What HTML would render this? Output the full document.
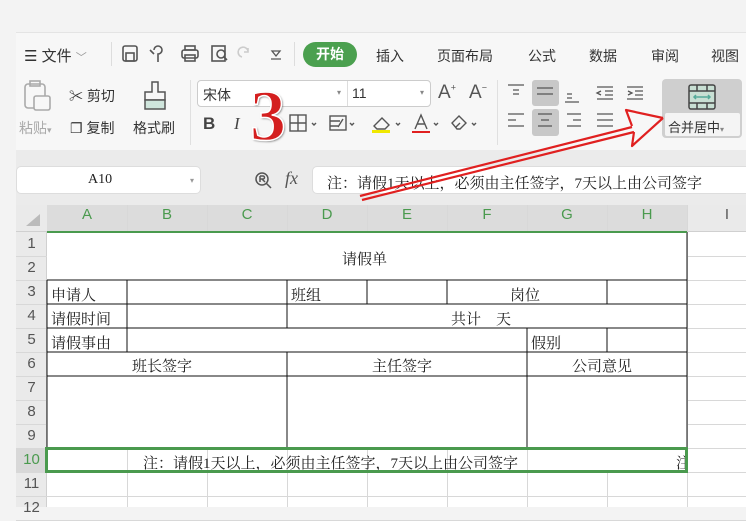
<!DOCTYPE html>
<html><head><meta charset="utf-8"><style>
*{margin:0;padding:0;box-sizing:border-box}
body{width:746px;height:507px;overflow:hidden;background:#f3f3f3;position:relative;font-family:"Liberation Sans","Noto Sans CJK SC",sans-serif;color:#333}
.a{position:absolute}
.t{font-size:14px;color:#333;white-space:nowrap}
.s{font-family:"Liberation Serif","Noto Serif CJK SC",serif;font-size:15px;color:#222;white-space:nowrap}
.hl{position:absolute;background:#d8d8d8}
</style></head><body>
<div class="a" style="left:16px;top:32px;width:730px;height:120px;background:#f7f7f7;border-top:1px solid #e4e4e4"></div>
<div class="a" style="left:16px;top:150px;width:730px;height:55px;background:#ebebeb"></div>
<div class="a t" style="left:24px;top:45px;font-size:15px">☰ 文件 <span style="color:#999;font-size:11px">﹀</span></div>
<div class="a" style="left:111px;top:42px;width:1px;height:24px;background:#ddd"></div>
<svg class="a" style="left:120px;top:44px" width="170" height="20" fill="none" stroke="#555" stroke-width="1.6">
<rect x="3" y="2" width="14" height="15" rx="2"/><rect x="6" y="9" width="8" height="8"/>
<path d="M34 6a4 4 0 1 1 4 4v8M30 6l4 4"/>
<rect x="62" y="6" width="16" height="8" rx="2"/><rect x="65" y="2" width="10" height="4"/><rect x="65" y="11" width="10" height="6"/>
<rect x="92" y="2" width="13" height="15"/><circle cx="101" cy="10" r="4"/><path d="M104 13l3 3"/>
<path d="M122 13a5 5 0 1 1 6-6M128 4v4h-4" stroke="#ccc"/>
<path d="M152 7h8l-4 5zM151 15h10" stroke-width="1.3"/>
</svg>
<div class="a" style="left:294px;top:42px;width:1px;height:24px;background:#ddd"></div>
<div class="a" style="left:303px;top:42px;width:54px;height:25px;border-radius:13px;background:#4ba04f;color:#fff;font-size:14px;font-weight:bold;text-align:center;line-height:25px">开始</div>
<div class="a t" style="left:376px;top:46px">插入</div>
<div class="a t" style="left:437px;top:46px">页面布局</div>
<div class="a t" style="left:528px;top:46px">公式</div>
<div class="a t" style="left:589px;top:46px">数据</div>
<div class="a t" style="left:651px;top:46px">审阅</div>
<div class="a t" style="left:711px;top:46px">视图</div>
<svg class="a" style="left:22px;top:80px" width="32" height="34" fill="none" stroke="#aaa" stroke-width="1.6"><rect x="3" y="4" width="20" height="24" rx="3"/><rect x="8" y="1" width="10" height="5"/><rect x="12" y="16" width="16" height="14" rx="2" fill="#f7f7f7"/></svg>
<div class="a t" style="left:19px;top:118px;color:#aaa">粘贴<span style="font-size:9px">▾</span></div>
<div class="a t" style="left:69px;top:86px">✂ 剪切</div>
<div class="a t" style="left:70px;top:118px">❐ 复制</div>
<svg class="a" style="left:141px;top:80px" width="28" height="32" fill="none" stroke="#555" stroke-width="1.5"><path d="M11 2h6v10h7v8H4v-8h7z"/><rect x="4" y="20" width="20" height="9" fill="#cfe5dc"/></svg>
<div class="a t" style="left:133px;top:118px">格式刷</div>
<div class="a" style="left:190px;top:80px;width:1px;height:65px;background:#e0e0e0"></div>
<div class="a" style="left:197px;top:80px;width:234px;height:27px;border:1px solid #ccc;border-radius:4px;background:#fff"></div>
<div class="a" style="left:347px;top:81px;width:1px;height:25px;background:#ddd"></div>
<div class="a t" style="left:203px;top:85px">宋体</div>
<div class="a t" style="left:352px;top:85px">11</div>
<div class="a" style="left:337px;top:88px;font-size:8px;color:#888">▾</div>
<div class="a" style="left:420px;top:88px;font-size:8px;color:#888">▾</div>
<div class="a t" style="left:438px;top:82px;font-size:19px;color:#555">A<sup style="font-size:9px">+</sup></div>
<div class="a t" style="left:469px;top:82px;font-size:19px;color:#555">A<sup style="font-size:9px">−</sup></div>
<div class="a t" style="left:203px;top:114px;font-size:17px;font-weight:bold;color:#444">B</div>
<div class="a t" style="left:234px;top:114px;font-size:17px;font-style:italic;color:#444;font-family:'Liberation Serif',serif">I</div>
<svg class="a" style="left:288px;top:112px" width="210" height="24" fill="none" stroke="#555" stroke-width="1.4">
<rect x="2" y="3" width="16" height="16"/><path d="M10 3v16M2 11h16"/><path d="M24 11l2 2 2-2" />
<rect x="42" y="4" width="16" height="14"/><path d="M42 9h10M42 14h8M55 7l-5 8"/><path d="M62 11l2 2 2-2"/>
<path d="M86 14l8-8 7 7-4 4h-8z"/><rect x="84" y="18" width="18" height="3" fill="#f0e800" stroke="none"/><path d="M108 11l2 2 2-2"/>
<path d="M127 17l6-14 6 14M129 12h8"/><rect x="124" y="19" width="18" height="2" fill="#e02020" stroke="none"/><path d="M146 11l2 2 2-2"/>
<path d="M164 11l7-7 7 7-6 6h-3zM168 15l4-4"/><path d="M184 11l2 2 2-2"/>
</svg>
<div class="a" style="left:497px;top:80px;width:1px;height:65px;background:#e0e0e0"></div>
<div class="a" style="left:532px;top:80px;width:27px;height:26px;background:#c8c8c8;border-radius:3px"></div>
<div class="a" style="left:532px;top:109px;width:27px;height:27px;background:#c8c8c8;border-radius:3px"></div>
<svg class="a" style="left:505px;top:82px" width="150" height="52" fill="none" stroke="#555" stroke-width="1.3">
<path d="M3 3h16M8 8h6M8 12h6"/>
<path d="M32 6h16M32 12h16"/>
<path d="M62 12h5M62 16h5M60 20h14"/>
<path d="M92 5h16M100 9h8M100 13h8M92 17h16M96 9l-4 2 4 2"/>
<path d="M122 5h16M130 9h8M130 13h8M122 17h16M123 9l4 2-4 2"/>
<path d="M3 32h16M3 38h8M3 44h16"/>
<path d="M33 32h14M36 38h8M33 44h14"/>
<path d="M62 32h14M68 38h8M62 44h14"/>
<path d="M92 32h16M92 38h16M92 44h16"/>
</svg>
<div class="a" style="left:662px;top:79px;width:80px;height:59px;background:#cfcfcf;border-radius:4px"></div>
<div class="a" style="left:665px;top:113px;width:75px;height:23px;background:#f4f4f4;border-radius:2px"></div>
<svg class="a" style="left:687px;top:83px" width="30" height="28" fill="none" stroke="#444" stroke-width="1.5"><rect x="2" y="2" width="26" height="24" rx="2" fill="#c8dfd3"/><path d="M2 8h26M2 20h26M10 2v6M20 2v6M10 20v6M20 20v6"/><path d="M7 14h16M9 12l-2 2 2 2M21 12l2 2-2 2" stroke="#5a9" /></svg>
<div class="a t" style="left:668px;top:117px;font-size:13px">合并居中<span style="font-size:8px;color:#888">▾</span></div>
<div class="a" style="left:16px;top:166px;width:185px;height:28px;background:#fff;border-radius:5px;border:1px solid #ddd"></div>
<div class="a s" style="left:88px;top:172px;font-size:14px">A10</div>
<div class="a" style="left:190px;top:176px;font-size:8px;color:#999">▾</div>
<svg class="a" style="left:253px;top:170px" width="22" height="22" fill="none" stroke="#555" stroke-width="1.5"><circle cx="9" cy="9" r="6"/><path d="M13 13l5 5M7 6v6M7 6h3a1.5 1.5 0 0 1 0 3H7M9 9l3 3"/></svg>
<div class="a" style="left:285px;top:168px;font-size:18px;font-style:italic;font-family:'Liberation Serif',serif;color:#555">fx</div>
<div class="a" style="left:312px;top:166px;width:440px;height:28px;background:#fff;border-radius:5px;border:1px solid #ddd"></div>
<div class="a s" style="left:327px;top:172px">注：请假1天以上，必须由主任签字，7天以上由公司签字</div>
<div class="a" style="left:16px;top:205px;width:730px;height:302px;background:#fff"></div>
<div class="a" style="left:16px;top:205px;width:730px;height:27px;background:#eaeaea;border-bottom:1px solid #d0d0d0"></div>
<div class="a" style="left:47px;top:205px;width:640px;height:27px;background:#dcdcdc"></div>
<div class="a" style="left:16px;top:232px;width:31px;height:275px;background:#eaeaea;border-right:1px solid #d0d0d0"></div>
<div class="a" style="left:16px;top:448px;width:31px;height:24px;background:#d8d8d8"></div>
<svg class="a" style="left:24px;top:212px" width="18" height="16"><path d="M16 2v12H2z" fill="#bbb"/></svg>
<div id="g"></div>
<div class="a" style="left:47px;top:233px;width:640px;height:214px;background:#fff"></div>
<svg class="a" style="left:0;top:0" width="746" height="507" stroke="#111" stroke-width="1.2" shape-rendering="crispEdges">
<path d="M687 232V448M47 280H687M47 304H687M47 328H687M47 352H687M47 376H687M47 280V448M127 280V352M287 280V304M367 280V304M447 280V304M607 280V304M287 304V328M527 328V352M607 328V352M287 352V448M527 352V448"/>
</svg>
<div class="a s" style="left:342px;top:248px">请假单</div>
<div class="a s" style="left:51px;top:284px">申请人</div>
<div class="a s" style="left:291px;top:284px">班组</div>
<div class="a s" style="left:510px;top:284px">岗位</div>
<div class="a s" style="left:51px;top:308px">请假时间</div>
<div class="a s" style="left:451px;top:308px">共计　天</div>
<div class="a s" style="left:51px;top:332px">请假事由</div>
<div class="a s" style="left:531px;top:332px">假别</div>
<div class="a s" style="left:132px;top:355px">班长签字</div>
<div class="a s" style="left:372px;top:355px">主任签字</div>
<div class="a s" style="left:572px;top:355px">公司意见</div>
<div class="a s" style="left:143px;top:452px">注：请假1天以上，必须由主任签字，7天以上由公司签字</div>
<div class="a" style="left:587px;top:449px;width:100px;height:22px;background:#fff"></div>
<div class="a s" style="left:676px;top:452px;width:10px;overflow:hidden">注</div>
<div class="a" style="left:45px;top:447px;width:643px;height:26px;border:3px solid #4a9a4e"></div>
<div class="a" style="left:47px;top:231px;width:640px;height:2px;background:#4a9a4e"></div>
<svg class="a" style="left:0;top:0" width="746" height="507" fill="none" stroke="#e02020" stroke-width="2.2" stroke-linejoin="round">
<path d="M360 196L632 127"/><path d="M362 200L634 132"/>
<path d="M663 118L626 110L632 126M663 118L632 146L634 132"/>
</svg>
<div class="a" style="left:250px;top:80px;font-size:72px;font-weight:bold;color:#d41f1f;font-family:'Liberation Serif',serif;line-height:72px;-webkit-text-stroke:1.5px #fff;text-shadow:1px 1px 2px #666">3</div>
<script>
var g=document.getElementById('g'),h='';
var cols=['A','B','C','D','E','F','G','H','I'];
for(var i=0;i<9;i++){var x=47+i*80;h+='<div class="a" style="left:'+x+'px;top:206px;width:80px;text-align:center;font-size:15px;color:'+(i<8?'#4a9a4e':'#555')+'">'+cols[i]+'</div>';h+='<div class="hl" style="left:'+(x+80)+'px;top:205px;width:1px;height:302px"></div>';}
for(var r=1;r<=12;r++){var y=232+(r-1)*24;h+='<div class="a" style="left:16px;top:'+(y+3)+'px;width:31px;text-align:center;font-size:15px;color:'+(r==10?'#4a9a4e':'#555')+'">'+r+'</div>';h+='<div class="hl" style="left:16px;top:'+(y+24)+'px;width:730px;height:1px"></div>';}
g.innerHTML=h;
</script>
</body></html>
